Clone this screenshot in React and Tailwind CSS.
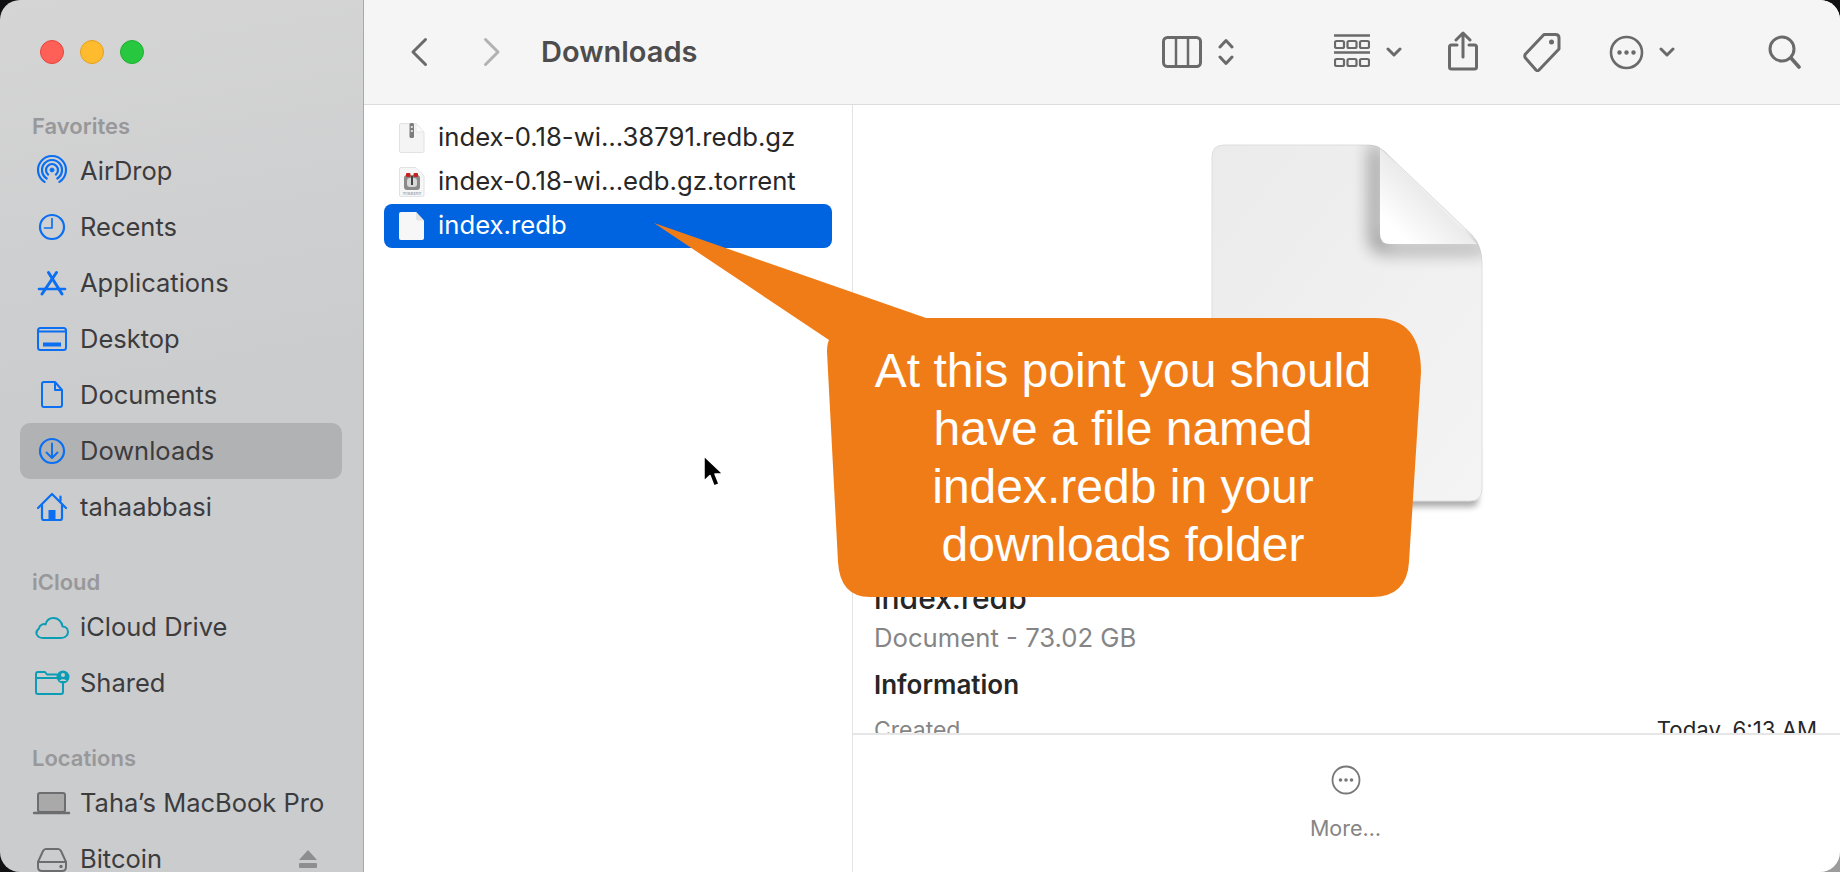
import React from "react";

const polar = (cx, cy, r, deg) => {
  const a = (deg * Math.PI) / 180;
  return [cx + r * Math.sin(a), cy - r * Math.cos(a)];
};
const arc = (cx, cy, r, span) => {
  const [x1, y1] = polar(cx, cy, r, -span);
  const [x2, y2] = polar(cx, cy, r, span);
  return `M${x1} ${y1}A${r} ${r} 0 1 1 ${x2} ${y2}`;
};

const BLUE = "#0a6ff2";
const TEAL = "#0b9db6";
const GRAY = "#6d6d6f";

const Box = ({ children }) => (
  <svg viewBox="0 0 48 36" className="w-12 h-9 shrink-0" fill="none" strokeLinecap="round" strokeLinejoin="round">
    {children}
  </svg>
);

const icons = {
  airdrop: (
    <Box>
      <g stroke={BLUE} strokeWidth="2.2">
        <circle cx="24" cy="17" r="2" fill={BLUE} strokeWidth="0.8" />
        <path d={arc(24, 17, 6, 140)} />
        <path d={arc(24, 17, 10, 148)} />
        <path d={arc(24, 17, 14, 148)} />
      </g>
    </Box>
  ),
  recents: (
    <Box>
      <g stroke={BLUE} strokeWidth="2.2">
        <circle cx="24" cy="18" r="12" />
        <path d="M24 9.5V19H16.5" strokeWidth="1.7" />
      </g>
    </Box>
  ),
  apps: (
    <Box>
      <g stroke={BLUE} strokeWidth="3">
        <path d="M28.500 7.500L14 29" />
        <path d="M20.500 7.500L34 29" />
        <path d="M11 24H37" strokeWidth="2.600" />
      </g>
    </Box>
  ),
  desktop: (
    <Box>
      <rect x="10" y="7" width="28" height="22" rx="2.5" stroke={BLUE} strokeWidth="2" />
      <path d="M10 10.5H38" stroke={BLUE} strokeWidth="2" />
      <rect x="15" y="21.5" width="18" height="4" fill={BLUE} />
    </Box>
  ),
  documents: (
    <Box>
      <path d="M16 5H27L34 13V28Q34 30 32 30H16Q14 30 14 28V7Q14 5 16 5ZM27 5V13H34" stroke={BLUE} strokeWidth="2" />
    </Box>
  ),
  downloads: (
    <Box>
      <g stroke={BLUE} strokeWidth="2.2">
        <circle cx="24" cy="18" r="12" />
        <path d="M24 10.5V24.5M18.5 19.5L24 25L29.5 19.5" strokeWidth="1.9" />
      </g>
    </Box>
  ),
  home: (
    <Box>
      <path d="M10 19L24 5L38 19M32.5 7.5V12" stroke={BLUE} strokeWidth="2.2" />
      <path d="M14 16V29Q14 31 16 31H32Q34 31 34 29V16" stroke={BLUE} strokeWidth="2.2" />
      <rect x="20.5" y="21" width="7" height="10" fill={BLUE} />
    </Box>
  ),
  cloud: (
    <Box>
      <path
        d="M15 29H33C37.5 29 40 26 40 23C40 19.5 37.5 17.5 34.5 17.5C34 12 29.5 9 25.5 9C21.5 9 18.5 11.5 17.5 15.5C16 14.5 11.5 15.5 11 19.5C9 21 8 23 8.5 25C9.5 27.5 12 29 15 29Z"
        stroke={TEAL}
        strokeWidth="2"
      />
    </Box>
  ),
  shared: (
    <Box>
      <path d="M31 13H8V27Q8 29 10 29H33Q35 29 35 27V18" stroke={TEAL} strokeWidth="2" />
      <path d="M8 13V9Q8 7 10 7H17L19 9.5H29M8 13H29" stroke={TEAL} strokeWidth="2" />
      <circle cx="35" cy="12" r="6.5" fill={TEAL} />
      <circle cx="35" cy="10" r="2" fill="#cbccce" />
      <path d="M31.5 16C32 13.5 38 13.5 38.5 16Z" fill="#cbccce" />
    </Box>
  ),
  laptop: (
    <Box>
      <rect x="10" y="8" width="27" height="19" rx="2" fill="#a9a9aa" stroke={GRAY} strokeWidth="2" />
      <path d="M6 28H41" stroke={GRAY} strokeWidth="2.4" />
    </Box>
  ),
  disk: (
    <Box>
      <path d="M10 21L15 10Q16 8 18 8H30Q32 8 33 10L38 21V26Q38 30 34 30H14Q10 30 10 26Z" stroke={GRAY} strokeWidth="2" />
      <path d="M10 21H38" stroke={GRAY} strokeWidth="2" />
      <circle cx="33" cy="25.5" r="1.7" fill={GRAY} />
    </Box>
  ),
};

const Row = ({ icon, label, active, trailing }) => (
  <div className={`ml-5 mr-[21px] h-14 shrink-0 flex items-center pl-2 pr-6 rounded-[10px] ${active ? "bg-[#b1b2b3]" : ""}`}>
    {icons[icon]}
    <span className="ml-[4px] text-[25.5px] text-[#3c3c3e] whitespace-nowrap">{label}</span>
    {trailing}
  </div>
);

const Label = ({ children, className }) => (
  <div className={`h-[33px] shrink-0 flex items-center pl-[32px] text-[22px] font-semibold text-[#98989a] ${className}`}>
    {children}
  </div>
);

const T = ({ w, h, vb, className = "", children }) => (
  <svg width={w} height={h} viewBox={vb || `0 0 ${w} ${h}`} className={`shrink-0 ${className}`} fill="none" stroke="#6a6a6a" strokeWidth="3" strokeLinecap="round" strokeLinejoin="round">
    {children}
  </svg>
);

const ChevDown = ({ className }) => (
  <T w={16} h={10} className={className}>
    <path d="M2 2L8 8L14 2" />
  </T>
);

const GzIcon = () => (
  <svg width="26" height="30" viewBox="0 0 26 30" className="shrink-0">
    <path d="M2 .5H17L25 9V28Q25 29.500 23.500 29.500H2Q.5 29.500 .5 28V2Q.5 .5 2 .5Z" fill="#f4f4f4" stroke="#e2e2e2" />
    <path d="M17 .5V9H25Z" fill="#fcfcfc" stroke="#e8e8e8" />
    <rect x="10.500" y="0" width="4.500" height="15" rx="1.500" fill="#7c7c7c" />
    <rect x="11.800" y="3" width="2" height="2" fill="#ddd" />
    <rect x="11.800" y="7" width="2" height="2" fill="#ddd" />
  </svg>
);

const TorrentIcon = () => (
  <svg width="26" height="30" viewBox="0 0 26 30" className="shrink-0">
    <path d="M2 .5H17L25 9V28Q25 29.500 23.500 29.500H2Q.5 29.500 .5 28V2Q.5 .5 2 .5Z" fill="#f6f6f6" stroke="#e2e2e2" />
    <rect x="5" y="8" width="16" height="15" rx="3" fill="#8a8a8a" />
    <rect x="8" y="11" width="10" height="9" rx="3" fill="#d8d8d8" />
    <rect x="7" y="6" width="4.500" height="4" rx="1" fill="#c8201c" />
    <rect x="14.500" y="6" width="4.500" height="4" rx="1" fill="#c8201c" />
    <rect x="12" y="9" width="2" height="9" fill="#444" />
    <text x="13" y="27.500" textAnchor="middle" fontSize="4" fill="#777" fontFamily="Liberation Serif, serif">TORRENT</text>
  </svg>
);

const BlankIcon = () => (
  <svg width="26" height="28" viewBox="0 0 26 28" className="shrink-0">
    <path d="M2 0H17L25 8.500V26Q25 28 23 28H2Q0 28 0 26V2Q0 0 2 0Z" fill="#f7f7f7" />
    <path d="M17 0V6.500Q17 8.500 19 8.500H25Z" fill="#e4e4e4" />
  </svg>
);

const FileRow = ({ icon, label, active }) => (
  <div className={`mx-5 h-11 flex items-center pl-[15px] rounded-lg ${active ? "bg-[#0064e1] text-white" : "text-[#272727]"}`}>
    {icon}
    <span className="ml-[13px] -mt-[2px] text-[25.7px] whitespace-nowrap">{label}</span>
  </div>
);

const DOC = "M12 0H158Q166 0 172 6L260 90Q270 101 270 118V344Q270 356 258 356H12Q0 356 0 344V12Q0 0 12 0Z";

const PreviewDoc = () => (
  <svg width="270" height="356" viewBox="0 0 270 356" className="mx-auto mt-[40px] shrink-0 overflow-visible">
    <defs>
      <linearGradient id="body" x1="0" y1="0" x2="1" y2="1">
        <stop offset="0" stopColor="#ebebeb" />
        <stop offset="1" stopColor="#f4f4f4" />
      </linearGradient>
      <linearGradient id="fold" x1="0" y1="1" x2="1" y2="0">
        <stop offset="0.15" stopColor="#ffffff" />
        <stop offset="0.75" stopColor="#dcdcdc" />
      </linearGradient>
      <filter id="soft" x="-50%" y="-50%" width="200%" height="200%">
        <feGaussianBlur stdDeviation="9" />
      </filter>
      <filter id="edge" x="-10%" y="-10%" width="120%" height="120%">
        <feGaussianBlur stdDeviation="3" />
      </filter>
      <clipPath id="bodyClip">
        <path d={DOC} />
      </clipPath>
    </defs>
    <path d="M4 300H266V356Q266 362 258 362H12Q4 362 4 356Z" fill="#000" opacity="0.32" filter="url(#edge)" />
    <path d={DOC} fill="url(#body)" stroke="#dedede" strokeWidth="1" />
    <g clipPath="url(#bodyClip)">
      <path d="M168 0V88Q168 100 180 100H275V106H172Q160 106 160 94V0Z" fill="#000" opacity="0.6" filter="url(#soft)" />
    </g>
    <path d="M168 3L262 96Q264 99 266 99H178Q168 99 168 89Z" fill="url(#fold)" />
  </svg>
);

export default function App() {
  return (
    <div
      className="relative w-[1840px] h-[872px] overflow-hidden bg-[linear-gradient(135deg,#111114_99%,#9c9c9c_99%)]"
      style={{ fontFamily: "Inter, 'Noto Sans', sans-serif" }}
    >
      <div className="w-full h-full flex rounded-[20px] overflow-hidden">
        {/* Sidebar */}
        <aside className="w-[364px] h-full shrink-0 flex flex-col overflow-hidden bg-[linear-gradient(170deg,#d5d5d5,#cbccce_45%,#cbccce)] border-r border-[#a9a9a9]">
          <div className="flex gap-4 pl-10 pt-10 shrink-0">
            <span className="w-6 h-6 rounded-full bg-[#fe5f57] border border-[#e5443d]" />
            <span className="w-6 h-6 rounded-full bg-[#febb2e] border border-[#e3a020]" />
            <span className="w-6 h-6 rounded-full bg-[#27c83f] border border-[#1eb02f]" />
          </div>
          <Label className="mt-[46px]">Favorites</Label>
          <Row icon="airdrop" label="AirDrop" />
          <Row icon="recents" label="Recents" />
          <Row icon="apps" label="Applications" />
          <Row icon="desktop" label="Desktop" />
          <Row icon="documents" label="Documents" />
          <Row icon="downloads" label="Downloads" active />
          <Row icon="home" label="tahaabbasi" />
          <Label className="mt-[31px]">iCloud</Label>
          <Row icon="cloud" label="iCloud Drive" />
          <Row icon="shared" label="Shared" />
          <Label className="mt-[31px]">Locations</Label>
          <Row icon="laptop" label="Taha’s MacBook Pro" />
          <Row
            icon="disk"
            label="Bitcoin"
            trailing={
              <svg width="20" height="19" viewBox="0 0 20 19" className="ml-auto mr-0">
                <path d="M10 0L19 10H1Z" fill="#8e8e90" />
                <rect x="1" y="13" width="18" height="5" rx="1" fill="#8e8e90" />
              </svg>
            }
          />
        </aside>

        {/* Main */}
        <main className="flex-1 flex flex-col bg-white min-w-0">
          <header className="h-[105px] shrink-0 flex items-center bg-[#f5f5f5] border-b border-[#dcdcdc] text-[#4d4d4d]">
            <T w={18} h={30} className="ml-[46px]">
              <path d="M15.500 2.500L3 15L15.500 27.500" stroke="#6a6a6a" />
            </T>
            <T w={18} h={30} className="ml-[55px]">
              <path d="M2.500 2.500L15 15L2.500 27.500" stroke="#b2b2b2" />
            </T>
            <span className="ml-[40px] text-[29px] font-semibold">Downloads</span>
            <T w={40} h={32} className="ml-[465px]">
              <rect x="1.500" y="1.500" width="37" height="29" rx="4" />
              <path d="M14 2V30M26 2V30" strokeWidth="2.500" />
            </T>
            <T w={16} h={28} className="ml-[16px]">
              <path d="M2 9L8 2.500L14 9M2 19L8 25.500L14 19" />
            </T>
            <T w={36} h={36} className="ml-[100px]">
              <g strokeWidth="2.200">
                <path d="M0 1.500H36M0 18.500H36" strokeLinecap="butt" strokeWidth="2.600" />
                <rect x="1" y="7" width="9" height="7" rx="1.500" />
                <rect x="13.500" y="7" width="9" height="7" rx="1.500" />
                <rect x="26" y="7" width="9" height="7" rx="1.500" />
                <rect x="1" y="25" width="9" height="7" rx="1.500" />
                <rect x="13.500" y="25" width="9" height="7" rx="1.500" />
                <rect x="26" y="25" width="9" height="7" rx="1.500" />
              </g>
            </T>
            <ChevDown className="ml-[16px]" />
            <T w={30} h={40} className="ml-[46px] -mt-[2px]">
              <path d="M9 14H3.500Q1.500 14 1.500 16V36Q1.500 38 3.500 38H26.500Q28.500 38 28.500 36V16Q28.500 14 26.500 14H21" />
              <path d="M15 26V2M8 9L15 2L22 9" />
            </T>
            <T w={38} h={40} className="ml-[45px]">
              <path d="M2.500 22L21 2.500H32.500Q36 2.500 36 6V17L16 38Q14.500 39.500 13 38L2.500 26Q1 24 2.500 22Z" />
              <circle cx="28.500" cy="10" r="2.500" fill="#6a6a6a" stroke="none" />
            </T>
            <T w={35} h={35} className="ml-[48px]">
              <circle cx="17.500" cy="17.500" r="15.500" strokeWidth="2.600" />
              <circle cx="10.500" cy="17.500" r="2.200" fill="#6a6a6a" stroke="none" />
              <circle cx="17.500" cy="17.500" r="2.200" fill="#6a6a6a" stroke="none" />
              <circle cx="24.500" cy="17.500" r="2.200" fill="#6a6a6a" stroke="none" />
            </T>
            <ChevDown className="ml-[15px]" />
            <T w={33} h={34} className="ml-[93px]">
              <circle cx="14" cy="14" r="12" />
              <path d="M23 23L31 32" strokeWidth="3.600" />
            </T>
          </header>

          <div className="flex-1 flex min-h-0">
            <section className="w-[489px] shrink-0 border-r border-[#e3e3e3] pt-[11px]">
              <FileRow icon={<GzIcon />} label="index-0.18-wi…38791.redb.gz" />
              <FileRow icon={<TorrentIcon />} label="index-0.18-wi…edb.gz.torrent" />
              <FileRow icon={<BlankIcon />} label="index.redb" active />
            </section>

            <section className="flex-1 min-w-0 flex flex-col">
              <div className="h-[628px] shrink-0 overflow-hidden flex flex-col">
                <PreviewDoc />
                <div className="mt-[79px] px-[21px] text-[30px] leading-[36px] font-medium text-[#262626]">index.redb</div>
                <div className="mt-[6px] px-[21px] text-[25.7px] leading-[32px] text-[#858585]">Document - 73.02 GB</div>
                <div className="mt-[15px] px-[21px] text-[26px] leading-[32px] font-semibold text-[#262626]">Information</div>
                <div className="mt-[14px] pl-[21px] pr-[23px] flex justify-between leading-[30px]">
                  <span className="text-[23px] text-[#858585]">Created</span>
                  <span className="text-[22.2px] text-[#262626]">Today, 6:13 AM</span>
                </div>
              </div>
              <footer className="flex-1 border-t-2 border-[#e6e6e6] flex flex-col items-center pt-[30px] pr-[2px]">
                <svg width="30" height="30" viewBox="0 0 30 30" fill="none" className="shrink-0">
                  <circle cx="15" cy="15" r="13.500" stroke="#777" strokeWidth="1.800" />
                  <circle cx="9.500" cy="15" r="1.800" fill="#777" />
                  <circle cx="15" cy="15" r="1.800" fill="#777" />
                  <circle cx="20.500" cy="15" r="1.800" fill="#777" />
                </svg>
                <span className="mt-[20px] text-[21.5px] leading-[26px] text-[#858585]">More…</span>
              </footer>
            </section>
          </div>
        </main>
      </div>

      {/* Callout drawn over the window */}
      <svg className="absolute left-[640px] top-[210px] pointer-events-none" width="800" height="400" viewBox="640 210 800 400">
        <path
          d="M654 223L926 318H1375Q1421 318 1421 372L1409 562Q1407 597 1372 597H870Q840 597 838 562L827 352Q827 344 829 340Z"
          fill="#f07c17"
        />
      </svg>
      <div
        className="absolute left-[827px] top-[318px] w-[592px] h-[279px] flex items-center justify-center text-center text-white text-[48px] leading-[58px]"
        style={{ fontFamily: "'Liberation Sans', Arial, sans-serif" }}
      >
        <div>
          At this point you should
          <br />
          have a file named
          <br />
          index.redb in your
          <br />
          downloads folder
        </div>
      </div>

      {/* Pointer */}
      <svg className="absolute left-[702px] top-[454px]" width="24" height="36" viewBox="0 0 24 36">
        <path d="M2 2V27L8 21.500L12 32L17 30L13 20H21Z" fill="#000" stroke="#fff" strokeWidth="1.500" strokeLinejoin="round" />
      </svg>
    </div>
  );
}
